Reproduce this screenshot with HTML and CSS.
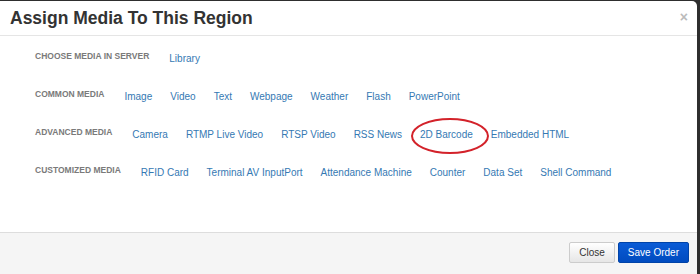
FILE: index.html
```html
<!DOCTYPE html>
<html lang="en">
<head>
    <meta charset="UTF-8">
    <title>Assign Media To This Region</title>
    <link rel="stylesheet" href="styles.css">
</head>
<body>
    <div class="modal">
        <div class="modal-header">
            <h4>Assign Media To This Region</h4>
            <span class="close">&times;</span>
        </div>

        <div class="modal-body">
            <div class="media-row">
                <div class="media-label">Choose Media In Server</div>
                <div class="media-links">
                    <a href="#">Library</a>
                </div>
            </div>

            <div class="media-row">
                <div class="media-label">Common Media</div>
                <div class="media-links">
                    <a href="#">Image</a>
                    <a href="#">Video</a>
                    <a href="#">Text</a>
                    <a href="#">Webpage</a>
                    <a href="#">Weather</a>
                    <a href="#">Flash</a>
                    <a href="#">PowerPoint</a>
                </div>
            </div>

            <div class="media-row">
                <div class="media-label">Advanced Media</div>
                <div class="media-links">
                    <a href="#">Camera</a>
                    <a href="#">RTMP Live Video</a>
                    <a href="#">RTSP Video</a>
                    <a href="#">RSS News</a>
                    <!-- circled in the screenshot -->
                    <a href="#" class="marked">2D Barcode</a>
                    <a href="#">Embedded HTML</a>
                </div>
            </div>

            <div class="media-row">
                <div class="media-label">Customized Media</div>
                <div class="media-links">
                    <a href="#">RFID Card</a>
                    <a href="#">Terminal AV InputPort</a>
                    <a href="#">Attendance Machine</a>
                    <a href="#">Counter</a>
                    <a href="#">Data Set</a>
                    <a href="#">Shell Command</a>
                </div>
            </div>
        </div>

        <div class="modal-footer">
            <button class="btn btn-default">Close</button>
            <button class="btn btn-primary">Save Order</button>
        </div>
    </div>
</body>
</html>
```

FILE: styles.css
```css
html, body {
    height: 274px;
    overflow: hidden;
}

body {
    margin: 0;
    background: #2e2e2e;
    font-family: "Liberation Sans", Arial, sans-serif;
}

.modal {
    width: 697px;
    margin-top: 1px;
    background: #fff;
    border-radius: 0 5px 0 0;
}

.modal-header {
    display: flex;
    justify-content: space-between;
    align-items: flex-start;
    padding: 7px 9px 7px 10px;
    border-bottom: 1px solid #e5e5e5;
}

.modal-header h4 {
    margin: 0;
    font-size: 17.5px;
    line-height: 20px;
    font-weight: bold;
    color: #333;
}

.close {
    font-size: 14px;
    font-weight: bold;
    line-height: 14px;
    margin-top: 2px;
    color: #bbb;
}

.modal-body {
    display: flex;
    flex-direction: column;
    gap: 22px;
    padding: 14px 35px 52px;
}

.media-row {
    display: flex;
    align-items: flex-start;
}

.media-label {
    font-size: 8.5px;
    line-height: 12px;
    font-weight: bold;
    text-transform: uppercase;
    color: #7a7a7a;
    margin-right: 20px;
}

.media-links {
    display: flex;
    gap: 18px;
    padding-top: 2px;
}

.media-links a {
    position: relative;
    font-size: 10px;
    line-height: 14px;
    color: #3579b3;
    text-decoration: none;
}

.media-links a.marked::after {
    content: "";
    position: absolute;
    left: -9px;
    top: -10px;
    width: 78px;
    height: 36px;
    box-sizing: border-box;
    border: 2px solid #d3222a;
    border-radius: 50%;
}

.modal-footer {
    display: flex;
    justify-content: flex-end;
    gap: 3px;
    padding: 9px 8px 20px;
    background: #f5f5f5;
    border-top: 1px solid #ddd;
}

.btn {
    height: 21px;
    padding: 0 9px;
    font-family: "Liberation Sans", Arial, sans-serif;
    font-size: 10px;
    border-radius: 2px;
    cursor: pointer;
}

.btn-default {
    color: #333;
    background: linear-gradient(#fff, #e6e6e6);
    border: 1px solid #ccc;
}

.btn-primary {
    color: #fff;
    background: linear-gradient(#0a5bd6, #004bbf);
    border: 1px solid #0043a8;
}
```
